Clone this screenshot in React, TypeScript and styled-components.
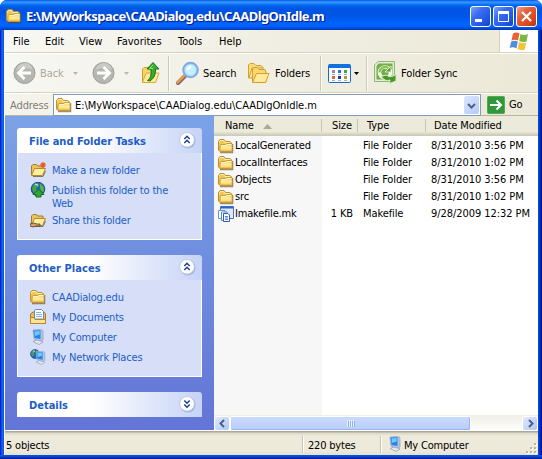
import React from "react";
import styled, { createGlobalStyle, css } from "styled-components";

const Global = createGlobalStyle`
  * { box-sizing: border-box; }
  html, body { margin: 0; padding: 0; background: #fff; overflow: hidden; }
  body { font: 11px/14px "DejaVu Sans Condensed", "DejaVu Sans", sans-serif; font-stretch: condensed; color: #000; }
  svg { display: block; flex: none; }
`;

const Label = styled.span<{ $ls?: number; $drop?: number }>`
  white-space: nowrap;
  letter-spacing: ${(p) => p.$ls ?? -0.1}px;
  padding-top: ${(p) => p.$drop ?? 0}px;
`;

const Window = styled.div`
  width: 542px;
  height: 459px;
  display: flex;
  flex-direction: column;
  border-radius: 7px 7px 0 0;
  overflow: hidden;
  background: linear-gradient(90deg, #0019cf 0, #0831d9 1px, #166aee 2px, #0855dd 4px, #0855dd 538px, #0441d8 539px, #001ea0 541px, #00138c 542px);
`;

const TitleBar = styled.div`
  height: 30px;
  flex: none;
  display: flex;
  align-items: center;
  padding: 2px 6px 0;
  background: linear-gradient(#0058e6 0, #3a93ff 2px, #288eff 3px, #0369f0 5px, #0057e4 8px, #0054e3 14px, #005cf5 20px, #0066ff 25px, #005bf0 27px, #0043cf 29px, #0037be 30px);
`;

const Title = styled.div`
  flex: 1;
  margin-left: 4px;
  font: bold 13px/18px "Noto Sans", sans-serif;
  letter-spacing: -0.55px;
  color: #fff;
  white-space: nowrap;
  text-shadow: 1px 1px 1px #0a1883;
`;

const CaptionButtons = styled.div`
  display: flex;
  gap: 2px;
  margin-right: -1px;
`;

const CaptionButton = styled.div<{ $close?: boolean }>`
  width: 21px;
  height: 21px;
  border: 1px solid #fff;
  border-radius: 3px;
  background: ${(p) =>
    p.$close
      ? "linear-gradient(135deg, #f0a088 0, #e3603c 35%, #da4a20 70%, #b83010 100%)"
      : "linear-gradient(135deg, #7da2f4 0, #3a6df0 35%, #2459e6 70%, #1640bd 100%)"};
`;

const Client = styled.div`
  flex: 1;
  min-height: 0;
  margin: 0 4px 0 4px;
  display: flex;
  flex-direction: column;
  background: #ece9d8;
  border-left: 1px solid #f6f5ee;
`;

const MenuBar = styled.div`
  height: 23px;
  flex: none;
  display: flex;
  align-items: stretch;
  background: linear-gradient(90deg, #f8f8f4, #efede0 60%, #ece9d8);
  border-bottom: 1px solid #d8d2bd;
`;

const MenuItem = styled.div<{ $w: number }>`
  width: ${(p) => p.$w}px;
  line-height: 23px;
  white-space: nowrap;
  letter-spacing: 0;
`;

const Flag = styled.div`
  margin-left: auto;
  width: 39px;
  background: #fff;
  border-left: 1px solid #d8d2bd;
  padding: 2px 0 0 9px;
`;

const ToolBar = styled.div`
  height: 40px;
  flex: none;
  display: flex;
  align-items: center;
  border-top: 1px solid #fff;
  border-bottom: 1px solid #d8d2bd;
  background: linear-gradient(90deg, #f7f7f3, #efede0 60%, #ece9d8);
`;

const Slot = styled.div<{ $w: number; $muted?: boolean }>`
  width: ${(p) => p.$w}px;
  flex: none;
  display: flex;
  align-items: center;
  color: ${(p) => (p.$muted ? "#aca899" : "#000")};
`;

const Rule = styled.div`
  width: 2px;
  height: 35px;
  flex: none;
  background: #cdc8b2;
  border-right: 1px solid #fbfaf4;
`;

const AddressBar = styled.div`
  height: 23px;
  flex: none;
  display: flex;
  border-top: 1px solid #fff;
  border-bottom: 1px solid #b8b5a4;
  background: linear-gradient(90deg, #f4f3ed, #eeecdf 60%, #ece9d8);
`;

const AddressName = styled.div`
  width: 48px;
  padding-left: 5px;
  line-height: 23px;
  color: #7f7c73;
`;

const AddressField = styled.div`
  width: 428px;
  height: 22px;
  border: 1px solid #7f9db9;
  background: #fff;
  display: flex;
  align-items: center;
  padding: 0 1px 0 2px;
`;

const Drop = styled.div`
  margin-left: auto;
  width: 15px;
  height: 18px;
  border-radius: 2px;
  background: linear-gradient(135deg, #dce7ff, #b6c9f6);
  display: grid;
  place-items: center;
`;

const Go = styled.div`
  display: flex;
  align-items: center;
  padding-left: 6px;
  gap: 4px;
`;

const Main = styled.div`
  flex: 1;
  min-height: 0;
  display: flex;
`;

const Sidebar = styled.div`
  width: 209px;
  flex: none;
  padding: 12px 12px 0;
  display: flex;
  flex-direction: column;
  border-bottom: 1px solid #fff;
  background: linear-gradient(#7ba2e7, #6375d6);
`;

const Panel = styled.section<{ $h: number; $gap: number }>`
  height: ${(p) => p.$h}px;
  flex: none;
  margin-bottom: ${(p) => p.$gap}px;
  display: flex;
  flex-direction: column;
`;

const PanelHead = styled.div`
  height: 25px;
  flex: none;
  display: flex;
  align-items: center;
  justify-content: space-between;
  padding: 0 6px 0 12px;
  border-radius: 3px 3px 0 0;
  background: linear-gradient(90deg, #fff 40%, #c6d3f7);
  color: #215dc6;
  font-weight: bold;
`;

const PanelBody = styled.div`
  flex: 1;
  border: 1px solid #fff;
  border-top: 0;
  background: #d6dff7;
  padding: 9px 0 0 12px;
  display: flex;
  flex-direction: column;
  gap: 4px;
`;

const Task = styled.div`
  display: flex;
  gap: 5px;
  color: #215dc6;
  line-height: 13px;
  align-items: flex-start;
`;

const TaskText = styled.div`
  padding-top: 2px;
  margin-bottom: -2px;
  white-space: pre;
  letter-spacing: -0.18px;
`;

const Files = styled.div`
  flex: 1;
  min-width: 0;
  display: flex;
  flex-direction: column;
  background: linear-gradient(90deg, #f7f7f7 108px, #fff 108px);
`;

const columns = css`
  display: grid;
  grid-template-columns: 108px 36px 68px 1fr;
`;

const HeaderRow = styled.div`
  ${columns}
  height: 20px;
  flex: none;
  background: linear-gradient(#ebeadb 16px, #dfdcc9 17px, #cbc7b8 20px);
`;

const HeaderCell = styled.div<{ $pad: number }>`
  display: flex;
  align-items: center;
  gap: 9px;
  padding-left: ${(p) => p.$pad}px;
  padding-top: 1px;
  height: 19px;
  background: linear-gradient(#c7c5b2, #c7c5b2) right 0 top 3px / 1px 13px no-repeat;
  &:last-child { background: none; }
`;

const FileRow = styled.div`
  ${columns}
  height: 17px;
  flex: none;
  align-items: center;
`;

const Cell = styled.div<{ $pad: number; $end?: boolean }>`
  display: flex;
  align-items: center;
  justify-content: ${(p) => (p.$end ? "flex-end" : "flex-start")};
  padding-left: ${(p) => p.$pad}px;
  padding-right: ${(p) => (p.$end ? 5 : 0)}px;
  gap: 1px;
  height: 17px;
`;

const ScrollBar = styled.div`
  margin-top: auto;
  height: 16px;
  display: flex;
  align-items: flex-end;
  background: linear-gradient(#f0eee6, #fefefb);
`;

const ScrollButton = styled.div`
  width: 16px;
  height: 15px;
  border: 1px solid #fff;
  border-radius: 3px;
  background: linear-gradient(135deg, #e1eafe, #aec6f7);
  display: grid;
  place-items: center;
`;

const Thumb = styled.div`
  width: 241px;
  height: 15px;
  border: 1px solid #fff;
  border-radius: 2px;
  box-shadow: inset -1px -1px 0 #98b3ee;
  background: linear-gradient(#cadaff, #b8cdfb);
  display: grid;
  place-items: center;
  margin-right: auto;
`;

const StatusBar = styled.div`
  height: 24px;
  flex: none;
  display: flex;
  align-items: center;
  padding-top: 2px;
  background: linear-gradient(#aca899 1px, #dcd8c5 2px, #eeebdd 5px, #ece9d8 20px, #e4e0cf);
`;

const StatusRule = styled.div`
  width: 2px;
  height: 17px;
  background: #c7c3ae;
  border-right: 1px solid #fff;
`;

const BottomEdge = styled.div`
  height: 4px;
  flex: none;
  background: linear-gradient(#0855dd, #0a3fd0 2px, #001290);
`;

function FolderIcon() {
  return (
    <svg width="16" height="16" viewBox="0 0 16 16">
      <path d="M2 14.5H14.5V6" fill="none" stroke="#5c4618" strokeOpacity=".6" strokeWidth="1.6" />
      <path d="M.5 12V3.5L2 1.5H6L7.5 3.5H12L13.5 5V13.5H2Z" fill="#eec75a" stroke="#c08f2c" />
      <path d="M1.5 4.5V3.5L2.5 2.5H5.5L7 4.5H12" fill="none" stroke="#fff3b0" />
      <path d="M2 13.5V8L3 6.5H7.5L8.5 5.5H14V13.5Z" fill="#fbdd7d" stroke="#c08f2c" strokeWidth=".8" />
      <path d="M3 7.5H8L9 6.5H13.5" fill="none" stroke="#fff8c8" />
      <path d="M3 9.5H13.5" stroke="#ffe99a" strokeWidth="2" />
      <path d="M3 12.5H13.5" stroke="#efbf4c" />
    </svg>
  );
}

function OpenFolder({ kind }: { kind: "new" | "share" }) {
  return (
    <svg width="17" height="16" viewBox="0 0 17 16">
      <path d="M1.5 13V4L3 2.5H6L8 4H13V8" fill="#eac35b" stroke="#a87a24" />
      <path d="M1.5 13.5L4.5 6.5H15.5L12.5 13.5Z" fill="#fff0a0" stroke="#b8882a" />
      <path d="M3 14.5H13L15.5 9" fill="none" stroke="#5d4820" strokeOpacity=".7" />
      {kind === "new" ? (
        <path d="M13 0V6M10 3H16M11 1L15 5M15 1L11 5" stroke="#e75528" strokeWidth="1.1" />
      ) : (
        <path d="M0 12Q4 10 7 12H10V14H6Q3 16 0 14Z" fill="#dba06a" stroke="#4a412e" strokeWidth=".8" />
      )}
    </svg>
  );
}

function Globe({ x = 8, y = 7, r = 6.8 }: { x?: number; y?: number; r?: number }) {
  return (
    <g transform={`translate(${x} ${y}) scale(${r / 7})`}>
      <circle r="7" fill="#2760c8" stroke="#1c4591" />
      <path d="M-5-4Q-2-7 0-6L1-3L-2-1L-1 2L-4 4L-6 0Z" fill="#43a641" />
      <path d="M2-6L6-2V3L3 2L2-2Z" fill="#54b847" />
      <path d="M-3-5L0-4" stroke="#b7e2fa" strokeWidth="1.4" />
    </g>
  );
}

function PublishIcon() {
  return (
    <svg width="17" height="16" viewBox="0 0 17 16">
      <Globe />
      <path d="M8.5 7L14 12.5H11V15H6V12.5H3Z" fill="#36a52c" stroke="#176c1c" />
    </svg>
  );
}

function DocumentsIcon() {
  return (
    <svg width="17" height="16" viewBox="0 0 17 16">
      <path d="M.5 5L3 3H14L15.5 5V14.5H.5Z" fill="#e9be50" stroke="#a87a24" />
      <path d="M4.5 10V1.5L6 .5H11.5L13.5 2.5V10Z" fill="#fff" stroke="#5f8fc9" />
      <path d="M6 3.5H11M6 5.5H12M6 7.5H12" stroke="#86b3e3" />
      <path d="M.5 8.5H4L5 10.5H15.5V14.5H.5Z" fill="#fce491" stroke="#b8882a" />
    </svg>
  );
}

function Screen() {
  return (
    <g>
      <path d="M3 12.5L8 10.5L13 13L9 15.5Z" fill="#e4e8ef" stroke="#8b96ad" strokeWidth=".7" />
      <path d="M3 1L10.5 .5L13 1.5V11L10 12L4 10Z" fill="#b5c4dc" stroke="#93a5c5" strokeWidth=".8" />
      <path d="M3.5 1.6L10.5 1.3V10L4.5 9Z" fill="#1e86ef" />
      <path d="M4.5 2.6L9.7 2V5.5L4.8 7Z" fill="#75c8ff" />
    </g>
  );
}

function ComputerIcon() {
  return (
    <svg width="17" height="16" viewBox="0 0 17 16">
      <Screen />
    </svg>
  );
}

function NetworkIcon() {
  return (
    <svg width="17" height="16" viewBox="0 0 17 16">
      <Globe x={5} y={5} r={4.5} />
      <g transform="translate(3.5 2) scale(.87)">
        <Screen />
      </g>
    </svg>
  );
}

function FileIcon() {
  return (
    <svg width="16" height="16" viewBox="0 0 16 16">
      <path d="M2.5 .5H15.5V12.5H2.5Z" fill="#dce9ff" stroke="#4775c4" />
      <path d="M3 1.5H15" stroke="#2d65cb" strokeWidth="2" />
      <path d="M.5 4.5H7V12.5H.5Z" fill="#fff" stroke="#6a93d5" />
      <path d="M3.5 6H9V14.5H3.5Z" fill="#fff" stroke="#5987d0" />
      <path d="M5.5 7.5H10L11.5 9V15.5H5.5Z" fill="#fff" stroke="#315fac" />
      <path d="M7 10.5H10M7 12H10M7 13.5H10" stroke="#2d65cb" strokeWidth=".8" />
    </svg>
  );
}

function NavArrow({ back }: { back?: boolean }) {
  return (
    <svg width="23" height="24" viewBox="0 0 23 24">
      <circle cx="11.5" cy="12" r="10.5" fill="#b6b6b2" stroke="#9d9d99" />
      <path d="M3 9Q6 2 12 2Q18 2 20 9Q12 5 3 9Z" fill="#cacac6" />
      <path
        d={back ? "M18 12H6M11.5 6L5.5 12L11.5 18" : "M5 12H17M11.5 6L17.5 12L11.5 18"}
        fill="none"
        stroke="#fff"
        strokeWidth="2.8"
      />
    </svg>
  );
}

function Caret({ color = "#b9b6a9" }: { color?: string }) {
  return (
    <svg width="5" height="3" viewBox="0 0 5 3">
      <path d="M0 0H5L2.5 3Z" fill={color} />
    </svg>
  );
}

function UpFolder() {
  return (
    <svg width="20" height="24" viewBox="0 0 20 24">
      <path d="M1.5 21V8L3 6.5H7L9 9H14V20Z" fill="#f6d66e" stroke="#d4a02d" />
      <path d="M1.5 21.5L5 12H18L14.5 21.5Z" fill="#ffeb95" stroke="#dda736" />
      <path d="M6.5 19.5Q11 17 10 8H6L12 1.5L18 8H14.5Q15 16 9 20Z" fill="#39ad32" stroke="#16731d" />
      <path d="M12 4L8.5 7.5H12" fill="none" stroke="#8ee277" />
    </svg>
  );
}

function SearchIcon() {
  return (
    <svg width="24" height="25" viewBox="0 0 24 25">
      <path d="M10 15L3 22" stroke="#7c6087" strokeWidth="4" strokeLinecap="round" />
      <path d="M9 15L2.5 21.5" stroke="#e79947" strokeWidth="2.5" strokeLinecap="round" />
      <circle cx="15.5" cy="9" r="7.3" fill="#c4efff" stroke="#86a9df" strokeWidth="2" />
      <circle cx="15.5" cy="9" r="6" fill="none" stroke="#6eb5e8" strokeOpacity=".5" />
      <path d="M11.5 9Q12 5 16 4.5Q17 6 14 9Z" fill="#fff" />
    </svg>
  );
}

function FoldersIcon() {
  return (
    <svg width="23" height="22" viewBox="0 0 23 22">
      <path d="M.5 16V3L2 1.5H6L8 3.5H13L14.5 5V16Z" fill="#f8db7a" stroke="#d4a02d" />
      <path d="M1 16L4 6H16" fill="#ffeda2" stroke="#d4a02d" />
      <path d="M4.5 20V7L6 5.5H9L11 7.5H17L18 10V20Z" fill="#f7d875" stroke="#d4a02d" />
      <path d="M4.5 20.5L8.5 11.5H21L17.5 20.5Z" fill="#ffeb98" stroke="#d99e29" />
    </svg>
  );
}

function ViewsIcon() {
  const dots = ["#9987a8", "#2573d7", "#38ad46", "#e2673c", "#173e9e", "#c88e28"];
  return (
    <svg width="23" height="19" viewBox="0 0 23 19">
      <rect x=".5" y=".5" width="22" height="18" rx="1" fill="#f9fbff" stroke="#1769d2" />
      <path d="M1 2H22" stroke="#1271df" strokeWidth="4" />
      {dots.map((c, i) => (
        <g key={i}>
          <rect x={4 + (i % 3) * 6} y={i < 3 ? 6 : 12} width="3" height="3" fill={c} />
          <path d={`M${4 + (i % 3) * 6} ${i < 3 ? 10.5 : 16.5}h3`} stroke="#a8b0c4" />
        </g>
      ))}
    </svg>
  );
}

function SyncIcon() {
  return (
    <svg width="23" height="24" viewBox="0 0 23 24">
      <path d="M4 .5H20.5V20.5H.5V4Z" fill="#e3efd4" stroke="#8db776" />
      <path d="M4.5 2.5H18.5V18.5H2.5V5Z" fill="#75aa4d" />
      <circle cx="11" cy="11.5" r="5.5" fill="none" stroke="#f2faea" strokeWidth="3.6" />
      <path d="M5.5 11.5A5.5 5.5 0 0 1 14.5 7.2" fill="none" stroke="#8cc152" strokeWidth="2" />
      <path d="M17 5V11H11Z" fill="#5f9f35" stroke="#f2faea" strokeWidth=".8" />
      <path d="M7 15.5Q11 21 16 19L15.5 22.5L22 20V13.5L19 15Q16 17 12 14Z" fill="#4d9629" stroke="#d9efc9" />
    </svg>
  );
}

function WindowsFlag() {
  return (
    <svg width="21" height="19" viewBox="0 0 21 19">
      <path d="M4 1.5Q7-.5 10.5 1.5L9 8.5Q6 7 2.5 8.5Z" fill="#e86232" />
      <path d="M11.5 2Q15 4 19 2L17.5 9.5Q14 11 10.2 9Z" fill="#78b943" />
      <path d="M2.2 9.5Q6 8 8.8 9.5L7.5 16.5Q4 14.5 .7 16Z" fill="#4d8ee0" />
      <path d="M10 10Q14 12 17.3 10.5L15.8 17.5Q12 19 8.5 17Z" fill="#f4c33d" />
    </svg>
  );
}

function GoIcon() {
  return (
    <svg width="18" height="18" viewBox="0 0 18 18">
      <rect x=".5" y=".5" width="17" height="17" rx="1" fill="#32973b" stroke="#51ac56" />
      <path d="M3 9H14M9.5 4.5L14 9L9.5 13.5" fill="none" stroke="#fff" strokeWidth="2" />
    </svg>
  );
}

function Chevron({ dir, color = "#4d6185" }: { dir: "left" | "right" | "down"; color?: string }) {
  const d = { left: "M6 1L2.5 4.5L6 8", right: "M3 1L6.5 4.5L3 8", down: "M1 3L4.5 6.5L8 3" }[dir];
  return (
    <svg width="9" height="9" viewBox="0 0 9 9">
      <path d={d} fill="none" stroke={color} strokeWidth="2" />
    </svg>
  );
}

function Toggle({ open }: { open?: boolean }) {
  return (
    <svg width="18" height="20" viewBox="0 0 18 20">
      <circle cx="9.8" cy="9.8" r="7.7" fill="#8797c4" fillOpacity=".5" />
      <circle cx="9" cy="8.8" r="7.3" fill="#fff" stroke="#b8c4e2" strokeWidth=".8" />
      <path
        d={open ? "M6.3 8L9 5.3L11.7 8M6.3 12L9 9.3L11.7 12" : "M6.3 5.5L9 8.2L11.7 5.5M6.3 9.5L9 12.2L11.7 9.5"}
        fill="none"
        stroke="#173a94"
        strokeWidth="1.4"
      />
    </svg>
  );
}

function SizeGrip() {
  return (
    <svg width="12" height="12" viewBox="0 0 12 12">
      {[[8, 0], [4, 4], [8, 4], [0, 8], [4, 8], [8, 8]].map(([x, y]) => (
        <g key={`${x}-${y}`}>
          <rect x={x + 1} y={y + 1} width="2" height="2" fill="#fff" />
          <rect x={x} y={y} width="2" height="2" fill="#b8b4a2" />
        </g>
      ))}
    </svg>
  );
}

const menus: [string, number][] = [["File", 32], ["Edit", 34], ["View", 38], ["Favorites", 61], ["Tools", 41], ["Help", 40]];

const files = [
  ["LocalGenerated", "", "File Folder", "8/31/2010 3:56 PM"],
  ["LocalInterfaces", "", "File Folder", "8/31/2010 1:02 PM"],
  ["Objects", "", "File Folder", "8/31/2010 3:56 PM"],
  ["src", "", "File Folder", "8/31/2010 1:02 PM"],
  ["Imakefile.mk", "1 KB", "Makefile", "9/28/2009 12:32 PM"],
];

const MenuPad = styled.div`
  width: 8px;
`;

const ListPad = styled.div`
  height: 1px;
  flex: none;
`;

const StatusPart = styled.div<{ $w: number; $pad: number }>`
  width: ${(p) => p.$w}px;
  padding-left: ${(p) => p.$pad}px;
  display: flex;
  align-items: center;
`;

const GripSlot = styled.div`
  margin-left: auto;
  align-self: flex-end;
`;

export default function App() {
  return (
    <>
      <Global />
      <Window>
        <TitleBar>
          <FolderIcon />
          <Title>E:\MyWorkspace\CAADialog.edu\CAADlgOnIdle.m</Title>
          <CaptionButtons>
            <CaptionButton>
              <svg width="19" height="19"><path d="M4 13.5H11" stroke="#fff" strokeWidth="3" /></svg>
            </CaptionButton>
            <CaptionButton>
              <svg width="19" height="19"><path d="M4.5 4.5H14.5V14.5H4.5Z" fill="none" stroke="#fff" /><path d="M4 5.5H15" stroke="#fff" strokeWidth="3" /></svg>
            </CaptionButton>
            <CaptionButton $close>
              <svg width="19" height="19"><path d="M5 5L14 14M14 5L5 14" stroke="#fff" strokeWidth="2.2" /></svg>
            </CaptionButton>
          </CaptionButtons>
        </TitleBar>
        <Client>
          <MenuBar>
            <MenuPad />
            {menus.map(([name, w]) => <MenuItem key={name} $w={w}>{name}</MenuItem>)}
            <Flag><WindowsFlag /></Flag>
          </MenuBar>
          <ToolBar>
            <Slot $w={8} />
            <Slot $w={27}><NavArrow back /></Slot>
            <Slot $w={33} $muted><Label $drop={2}>Back</Label></Slot>
            <Slot $w={19}><Caret /></Slot>
            <Slot $w={32}><NavArrow /></Slot>
            <Slot $w={17}><Caret /></Slot>
            <Slot $w={27}><UpFolder /></Slot>
            <Rule />
            <Slot $w={5} />
            <Slot $w={28}><SearchIcon /></Slot>
            <Slot $w={45}><Label $drop={2}>Search</Label></Slot>
            <Slot $w={27}><FoldersIcon /></Slot>
            <Slot $w={45}><Label $drop={2}>Folders</Label></Slot>
            <Rule />
            <Slot $w={6} />
            <Slot $w={26}><ViewsIcon /></Slot>
            <Slot $w={12}><Caret color="#000" /></Slot>
            <Rule />
            <Slot $w={6} />
            <Slot $w={27}><SyncIcon /></Slot>
            <Label $drop={2}>Folder Sync</Label>
          </ToolBar>
          <AddressBar>
            <AddressName><Label>Address</Label></AddressName>
            <AddressField>
              <FolderIcon />
              <Slot $w={3} />
              <Label $drop={1} $ls={-0.06}>E:\MyWorkspace\CAADialog.edu\CAADlgOnIdle.m</Label>
              <Drop><Chevron dir="down" /></Drop>
            </AddressField>
            <Go><GoIcon /><Label>Go</Label></Go>
          </AddressBar>
          <Main>
            <Sidebar>
              <Panel $h={112} $gap={15}>
                <PanelHead><Label $drop={3} $ls={0}>File and Folder Tasks</Label><Toggle open /></PanelHead>
                <PanelBody>
                  <Task><OpenFolder kind="new" /><TaskText>Make a new folder</TaskText></Task>
                  <Task><PublishIcon /><TaskText>{"Publish this folder to the\nWeb"}</TaskText></Task>
                  <Task><OpenFolder kind="share" /><TaskText>Share this folder</TaskText></Task>
                </PanelBody>
              </Panel>
              <Panel $h={122} $gap={15}>
                <PanelHead><Label $drop={3} $ls={0.05}>Other Places</Label><Toggle open /></PanelHead>
                <PanelBody>
                  <Task><Slot $w={17}><FolderIcon /></Slot><TaskText>CAADialog.edu</TaskText></Task>
                  <Task><DocumentsIcon /><TaskText>My Documents</TaskText></Task>
                  <Task><ComputerIcon /><TaskText>My Computer</TaskText></Task>
                  <Task><NetworkIcon /><TaskText>My Network Places</TaskText></Task>
                </PanelBody>
              </Panel>
              <Panel $h={25} $gap={0}>
                <PanelHead><Label $drop={3} $ls={0}>Details</Label><Toggle /></PanelHead>
              </Panel>
            </Sidebar>
            <Files>
              <HeaderRow>
                <HeaderCell $pad={11}>
                  <Label>Name</Label>
                  <svg width="9" height="5" viewBox="0 0 9 5"><path d="M0 5L4.5 0L9 5Z" fill="#aca899" /></svg>
                </HeaderCell>
                <HeaderCell $pad={10}><Label>Size</Label></HeaderCell>
                <HeaderCell $pad={9}><Label>Type</Label></HeaderCell>
                <HeaderCell $pad={8}><Label>Date Modified</Label></HeaderCell>
              </HeaderRow>
              <ListPad />
              {files.map(([name, size, type, date]) => (
                <FileRow key={name}>
                  <Cell $pad={4}>
                    {size ? <FileIcon /> : <FolderIcon />}
                    <Label $ls={-0.17}>{name}</Label>
                  </Cell>
                  <Cell $pad={0} $end><Label>{size}</Label></Cell>
                  <Cell $pad={5}><Label>{type}</Label></Cell>
                  <Cell $pad={5}><Label $ls={-0.06}>{date}</Label></Cell>
                </FileRow>
              ))}
              <ScrollBar>
                <ScrollButton><Chevron dir="left" /></ScrollButton>
                <Thumb>
                  <svg width="8" height="7"><path d="M.5 0V7M2.5 0V7M4.5 0V7M6.5 0V7" stroke="#eef4fe" /><path d="M1.5 1V7M3.5 1V7M5.5 1V7M7.5 1V7" stroke="#8cb0f8" /></svg>
                </Thumb>
                <ScrollButton><Chevron dir="right" /></ScrollButton>
              </ScrollBar>
            </Files>
          </Main>
          <StatusBar>
            <StatusPart $w={297} $pad={1}><Label $drop={3} $ls={-0.2}>5 objects</Label></StatusPart>
            <StatusRule />
            <StatusPart $w={76} $pad={4}><Label $drop={3} $ls={-0.2}>220 bytes</Label></StatusPart>
            <StatusRule />
            <StatusPart $w={120} $pad={5}><ComputerIcon /><Label $drop={3} $ls={-0.2}>My Computer</Label></StatusPart>
            <GripSlot><SizeGrip /></GripSlot>
          </StatusBar>
        </Client>
        <BottomEdge />
      </Window>
    </>
  );
}
